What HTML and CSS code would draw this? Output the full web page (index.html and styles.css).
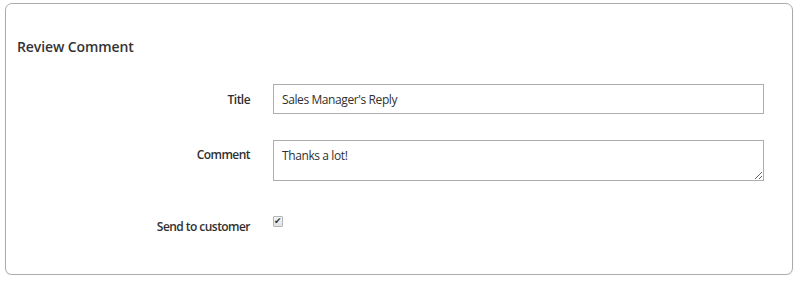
FILE: index.html
```html
<!DOCTYPE html>
<html lang="en">
<head>
  <meta charset="UTF-8" />
  <title>Review Comment</title>
  <link rel="stylesheet" href="styles.css">
</head>
<body>
  <!-- Review comment box -->
  <div class="panel">
    <h2 class="panel-title">Review Comment</h2>
    <form class="review-form">
      <label class="field-label" for="title">Title</label>
      <div class="field">
        <input type="text" id="title" class="text-input" value="Sales Manager's Reply" />
      </div>

      <label class="field-label label-top" for="comment">Comment</label>
      <div class="field">
        <textarea id="comment" class="text-area">Thanks a lot!</textarea>
      </div>

      <label class="field-label label-check" for="notify">Send to customer</label>
      <div class="field">
        <input type="checkbox" id="notify" class="check" checked />
      </div>
    </form>
  </div>
</body>
</html>
```

FILE: styles.css
```css
body {
  margin: 0;
  background: #fff;
  font-family: 'Open Sans', 'DejaVu Sans', sans-serif;
  color: #303030;
}

.panel {
  margin: 3px 5px 0 5px;
  height: 270px;
  border: 1px solid #ababab;
  border-radius: 7px;
  box-shadow: 0 1px 1px rgba(0,0,0,0.12);
  padding: 0 28px 0 11px;
}

.panel-title {
  margin: 33px 0 0 0;
  font-size: 14px;
  line-height: 19px;
  font-weight: 600;
  letter-spacing: -0.1px;
  color: #333;
}

.review-form {
  display: grid;
  grid-template-columns: 233px 1fr;
  column-gap: 23px;
  row-gap: 26px;
  margin-top: 28px;
}

.field-label {
  text-align: right;
  font-size: 12px;
  font-weight: 600;
  letter-spacing: -0.55px;
  color: #303030;
  align-self: center;
}

.label-top {
  align-self: start;
  padding-top: 6px;
}

.label-check {
  align-self: start;
  padding-top: 11px;
}

.field {
  display: flex;
}

.text-input,
.text-area {
  box-sizing: border-box;
  width: 100%;
  margin: 0;
  border: 1px solid #adadad;
  border-radius: 0;
  font-family: 'Open Sans', 'DejaVu Sans', sans-serif;
  font-size: 12px;
  letter-spacing: -0.4px;
  color: #303030;
  background: #fff;
}

.text-input {
  height: 30px;
  padding: 0 8px;
}

.text-area {
  height: 41px;
  padding: 6px 8px;
  resize: vertical;
}

.check {
  appearance: none;
  -webkit-appearance: none;
  box-sizing: border-box;
  position: relative;
  margin: 9px 0 0 0;
  width: 10px;
  height: 11px;
  border: 1px solid #b5b5b5;
  border-radius: 1px;
  background: linear-gradient(#f4f4f4, #e2e2e2);
}

.check:checked::after {
  content: "\2714";
  position: absolute;
  left: 0;
  top: -2px;
  font-family: 'DejaVu Sans', sans-serif;
  font-size: 9px;
  line-height: 12px;
  color: #333;
}
```
